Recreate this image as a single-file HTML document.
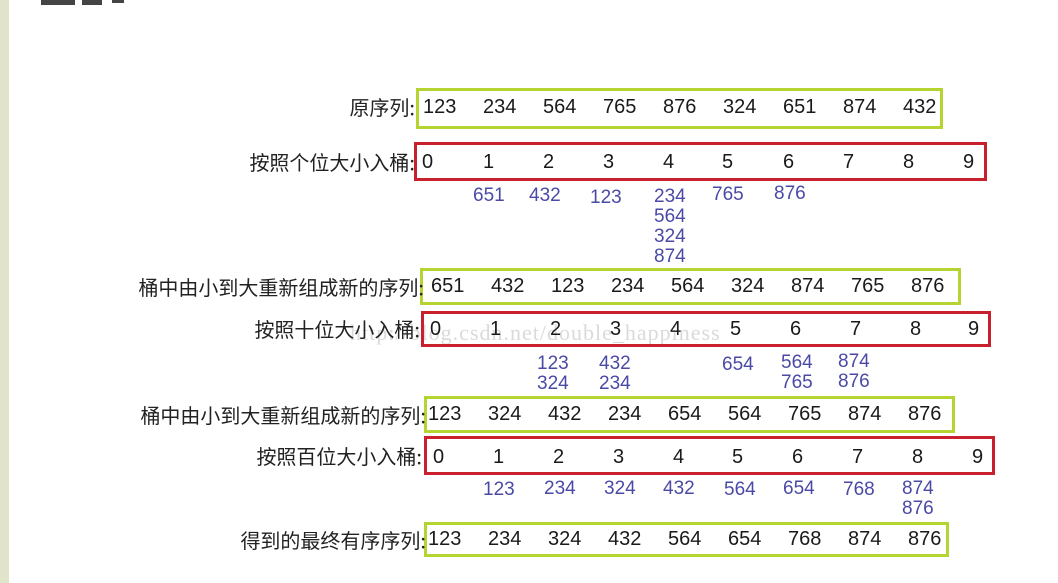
<!DOCTYPE html>
<html><head><meta charset="utf-8"><style>
body{margin:0;width:1058px;height:583px;background:#fff;position:relative;overflow:hidden;font-family:"Liberation Sans","Noto Sans CJK SC",sans-serif;}
.strip{position:absolute;left:0;top:0;width:9px;height:583px;background:#e2e3cb;}
.t{position:absolute;background:#444;top:0;height:5px;}
.box{position:absolute;box-sizing:border-box;border:3px solid #b4d431;}
.red{border-color:#c9202d;}
.lab{position:absolute;font-size:20px;color:#222;text-align:right;white-space:nowrap;font-family:"Noto Sans CJK SC",sans-serif;}
.n{position:absolute;font-size:20px;color:#1a1a1a;}
.b{position:absolute;font-size:19px;color:#4a4aa6;line-height:20px;}
.wm{position:absolute;left:350px;top:320px;font-family:"Liberation Serif",serif;font-size:22px;color:rgba(150,150,150,0.35);letter-spacing:1px;}
</style></head><body>
<div class="strip"></div>
<div class="t" style="left:41px;width:34px"></div><div class="t" style="left:82px;width:20px"></div><div class="t" style="left:112px;width:12px;height:3px"></div>

<div class="box" style="left:416px;top:88px;width:527px;height:41px"></div>
<div class="lab" style="right:643px;top:92px">原序列:</div>
<div class="n" style="left:423px;top:96px">123</div><div class="n" style="left:483px;top:96px">234</div><div class="n" style="left:543px;top:96px">564</div><div class="n" style="left:603px;top:96px">765</div><div class="n" style="left:663px;top:96px">876</div><div class="n" style="left:723px;top:96px">324</div><div class="n" style="left:783px;top:96px">651</div><div class="n" style="left:843px;top:96px">874</div><div class="n" style="left:903px;top:96px">432</div>

<div class="box red" style="left:414px;top:142px;width:573px;height:39px"></div>
<div class="lab" style="right:643px;top:147px">按照个位大小入桶:</div>
<div class="n" style="left:422px;top:151px">0</div><div class="n" style="left:483px;top:151px">1</div><div class="n" style="left:543px;top:151px">2</div><div class="n" style="left:603px;top:151px">3</div><div class="n" style="left:663px;top:151px">4</div><div class="n" style="left:722px;top:151px">5</div><div class="n" style="left:783px;top:151px">6</div><div class="n" style="left:843px;top:151px">7</div><div class="n" style="left:903px;top:151px">8</div><div class="n" style="left:963px;top:151px">9</div>
<div class="b" style="left:473px;top:186px">651</div><div class="b" style="left:529px;top:186px">432</div><div class="b" style="left:590px;top:188px">123</div><div class="b" style="left:654px;top:187px">234<br>564<br>324<br>874</div><div class="b" style="left:712px;top:185px">765</div><div class="b" style="left:774px;top:184px">876</div>

<div class="box" style="left:420px;top:268px;width:541px;height:37px"></div>
<div class="lab" style="right:634px;top:272px">桶中由小到大重新组成新的序列:</div>
<div class="n" style="left:431px;top:275px">651</div><div class="n" style="left:491px;top:275px">432</div><div class="n" style="left:551px;top:275px">123</div><div class="n" style="left:611px;top:275px">234</div><div class="n" style="left:671px;top:275px">564</div><div class="n" style="left:731px;top:275px">324</div><div class="n" style="left:791px;top:275px">874</div><div class="n" style="left:851px;top:275px">765</div><div class="n" style="left:911px;top:275px">876</div>

<div class="wm">http://blog.csdn.net/double_happiness</div>
<div class="box red" style="left:421px;top:311px;width:570px;height:36px"></div>
<div class="lab" style="right:638px;top:314px">按照十位大小入桶:</div>
<div class="n" style="left:430px;top:318px">0</div><div class="n" style="left:490px;top:318px">1</div><div class="n" style="left:550px;top:318px">2</div><div class="n" style="left:610px;top:318px">3</div><div class="n" style="left:670px;top:318px">4</div><div class="n" style="left:730px;top:318px">5</div><div class="n" style="left:790px;top:318px">6</div><div class="n" style="left:850px;top:318px">7</div><div class="n" style="left:910px;top:318px">8</div><div class="n" style="left:968px;top:318px">9</div>
<div class="b" style="left:537px;top:354px">123<br>324</div><div class="b" style="left:599px;top:354px">432<br>234</div><div class="b" style="left:722px;top:355px">654</div><div class="b" style="left:781px;top:353px">564<br>765</div><div class="b" style="left:838px;top:352px">874<br>876</div>

<div class="box" style="left:424px;top:396px;width:531px;height:37px"></div>
<div class="lab" style="right:632px;top:400px">桶中由小到大重新组成新的序列:</div>
<div class="n" style="left:428px;top:403px">123</div><div class="n" style="left:488px;top:403px">324</div><div class="n" style="left:548px;top:403px">432</div><div class="n" style="left:608px;top:403px">234</div><div class="n" style="left:668px;top:403px">654</div><div class="n" style="left:728px;top:403px">564</div><div class="n" style="left:788px;top:403px">765</div><div class="n" style="left:848px;top:403px">874</div><div class="n" style="left:908px;top:403px">876</div>

<div class="box red" style="left:424px;top:436px;width:571px;height:39px"></div>
<div class="lab" style="right:636px;top:441px">按照百位大小入桶:</div>
<div class="n" style="left:433px;top:446px">0</div><div class="n" style="left:493px;top:446px">1</div><div class="n" style="left:553px;top:446px">2</div><div class="n" style="left:613px;top:446px">3</div><div class="n" style="left:673px;top:446px">4</div><div class="n" style="left:732px;top:446px">5</div><div class="n" style="left:792px;top:446px">6</div><div class="n" style="left:852px;top:446px">7</div><div class="n" style="left:912px;top:446px">8</div><div class="n" style="left:972px;top:446px">9</div>
<div class="b" style="left:483px;top:480px">123</div><div class="b" style="left:544px;top:479px">234</div><div class="b" style="left:604px;top:479px">324</div><div class="b" style="left:663px;top:479px">432</div><div class="b" style="left:724px;top:480px">564</div><div class="b" style="left:783px;top:479px">654</div><div class="b" style="left:843px;top:480px">768</div><div class="b" style="left:902px;top:479px">874<br>876</div>

<div class="box" style="left:424px;top:522px;width:525px;height:35px"></div>
<div class="lab" style="right:632px;top:525px">得到的最终有序序列:</div>
<div class="n" style="left:428px;top:528px">123</div><div class="n" style="left:488px;top:528px">234</div><div class="n" style="left:548px;top:528px">324</div><div class="n" style="left:608px;top:528px">432</div><div class="n" style="left:668px;top:528px">564</div><div class="n" style="left:728px;top:528px">654</div><div class="n" style="left:788px;top:528px">768</div><div class="n" style="left:848px;top:528px">874</div><div class="n" style="left:908px;top:528px">876</div>
</body></html>
